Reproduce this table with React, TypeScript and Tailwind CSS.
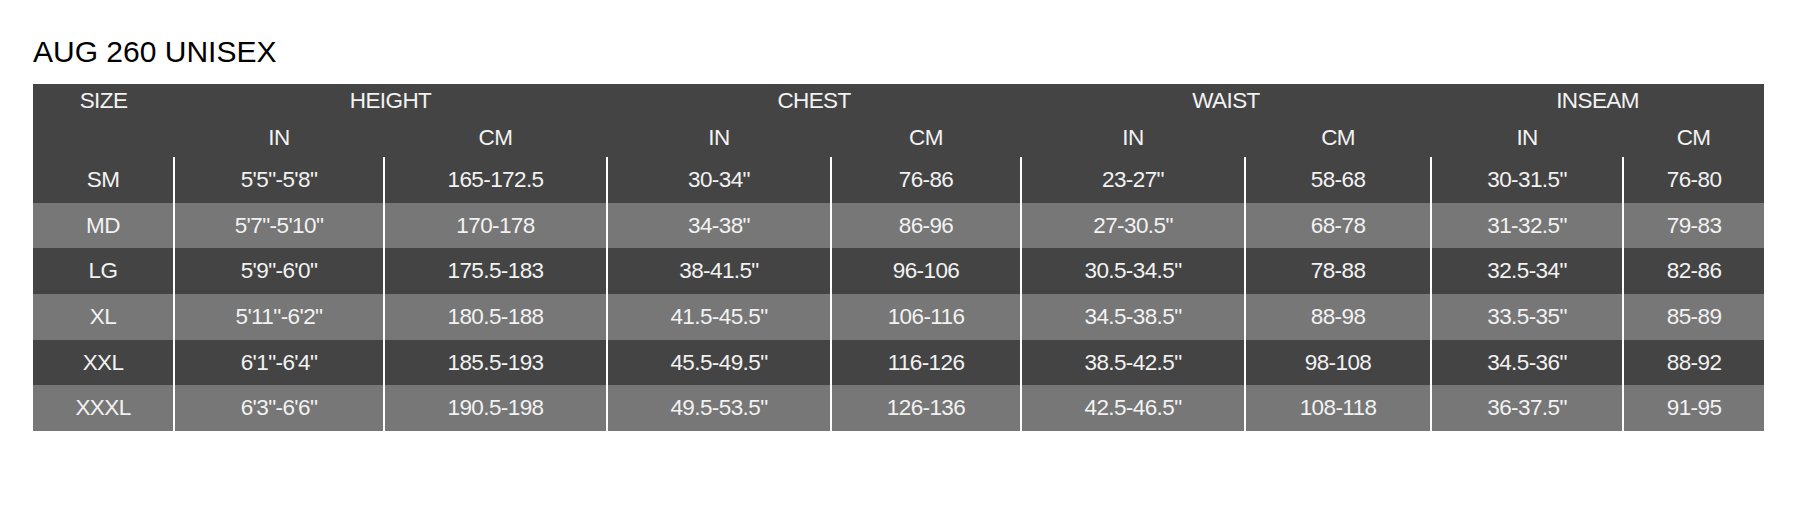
const rows: string[][] = [
  ["SM", "5'5\"-5'8\"", "165-172.5", "30-34\"", "76-86", "23-27\"", "58-68", "30-31.5\"", "76-80"],
  ["MD", "5'7\"-5'10\"", "170-178", "34-38\"", "86-96", "27-30.5\"", "68-78", "31-32.5\"", "79-83"],
  ["LG", "5'9\"-6'0\"", "175.5-183", "38-41.5\"", "96-106", "30.5-34.5\"", "78-88", "32.5-34\"", "82-86"],
  ["XL", "5'11\"-6'2\"", "180.5-188", "41.5-45.5\"", "106-116", "34.5-38.5\"", "88-98", "33.5-35\"", "85-89"],
  ["XXL", "6'1\"-6'4\"", "185.5-193", "45.5-49.5\"", "116-126", "38.5-42.5\"", "98-108", "34.5-36\"", "88-92"],
  ["XXXL", "6'3\"-6'6\"", "190.5-198", "49.5-53.5\"", "126-136", "42.5-46.5\"", "108-118", "36-37.5\"", "91-95"],
];

const widths = [141, 210, 223, 224, 190, 224, 186, 192, 141];

export default function App() {
  return (
    <div className="min-h-[520px] bg-white px-[33px] pt-[37px] font-['Liberation_Sans',Arial,sans-serif]">
      <h1 className="text-[30px] leading-[30px] text-black">AUG 260 UNISEX</h1>
      <table className="mt-[17px] w-[1731px] table-fixed border-collapse text-center text-[22.5px] text-[#f2f2f2] tracking-[-0.6px]">
        <colgroup>
          {widths.map((w, i) => (
            <col key={i} style={{ width: w }} />
          ))}
        </colgroup>
        <thead>
          <tr className="h-[34px] bg-[#444444]">
            <th className="font-normal">SIZE</th>
            <th colSpan={2} className="font-normal">HEIGHT</th>
            <th colSpan={2} className="font-normal">CHEST</th>
            <th colSpan={2} className="font-normal">WAIST</th>
            <th colSpan={2} className="font-normal">INSEAM</th>
          </tr>
          <tr className="h-[39px] bg-[#444444]">
            <th className="font-normal"></th>
            {["IN", "CM", "IN", "CM", "IN", "CM", "IN", "CM"].map((u, i) => (
              <th key={i} className="font-normal">{u}</th>
            ))}
          </tr>
        </thead>
        <tbody>
          {rows.map((r, ri) => (
            <tr key={r[0]} className={`h-[45.7px] ${ri % 2 === 0 ? "bg-[#444444]" : "bg-[#777777]"}`}>
              {r.map((c, ci) => (
                <td key={ci} className={ci === 0 ? "" : "border-l-2 border-white"}>
                  {c}
                </td>
              ))}
            </tr>
          ))}
        </tbody>
      </table>
    </div>
  );
}
